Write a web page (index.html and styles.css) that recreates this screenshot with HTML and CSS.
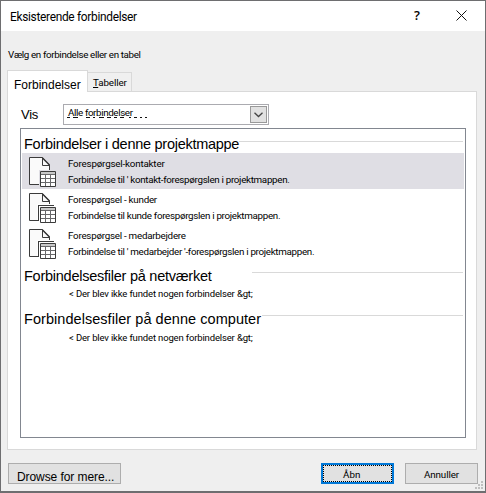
FILE: index.html
```html
<!DOCTYPE html>
<html lang="da">
<head>
<meta charset="utf-8">
<title>Eksisterende forbindelser</title>
<link rel="stylesheet" href="styles.css">
</head>
<body>
<svg class="defs" width="0" height="0" aria-hidden="true">
  <symbol id="file" viewBox="0 0 28 32">
    <path d="M.5 .5H13.5L20.5 8V27.5H.5Z" fill="#fafafa" stroke="#3b3b3b"/>
    <path d="M13.5 .5V8.500H20.500" fill="none" stroke="#3b3b3b"/>
    <path d="M13.500 1L20.500 8" fill="none" stroke="#3b3b3b" stroke-width="1.400"/>
  </symbol>
  <symbol id="grid" viewBox="0 0 16 16">
    <path d="M.5 .5H15.500V15.500H.5Z" fill="#fff" stroke="#3b3b3b"/>
    <path d="M1 1H15V3H1Z" fill="#c8c8c8"/>
    <path d="M1 3.500H15M1 7.500H15M1 11.500H15M5.500 4V15M10.500 4V15" fill="none" stroke="#68686a"/>
  </symbol>
</svg>
<main class="dialog">
  <header class="titlebar">
    <h1 class="title">Eksisterende forbindelser</h1>
    <span class="help">?</span>
    <svg class="close" width="11" height="11" viewBox="0 0 11 11"><path d="M.5 .5L10.500 10.500M10.500 .5L.5 10.500" stroke="#111" fill="none"/></svg>
  </header>
  <p class="prompt">Vælg en forbindelse eller en tabel</p>
  <nav class="tabs">
    <div class="tab active">Forbindelser</div>
    <div class="tab"><span><u>T</u>abeller</span></div>
  </nav>
  <section class="panel">
    <div class="filter">
      <label class="filter-label">Vis</label>
      <div class="select">
        <span class="select-text">Alle forbindelser</span>
        <svg class="residue" width="86" height="1" viewBox="0 0 86 1"><path d="M1 .5H4M7 .5H12M20 .5H24M27 .5H29M33 .5H38M41 .5H45M48 .5H51M54 .5H58M63 .5H65M68 .5H71M74 .5H76M79 .5H81" stroke="#111" fill="none"/></svg>
        <span class="drop"><svg width="9" height="6" viewBox="0 0 9 6"><path d="M.5 .7L4.500 4.500L8.500 .7" fill="none" stroke="#444" stroke-width="1.300"/></svg></span>
      </div>
    </div>
    <div class="list">
      <div class="group"><h2 class="g1">Forbindelser i denne projektmappe</h2><i class="rule r1"></i></div>
      <div class="item selected">
        <div class="icon"><svg class="page" width="28" height="32"><use href="#file"/></svg><svg class="table" width="16" height="16"><use href="#grid"/></svg></div>
        <div class="text"><p class="a1">Forespørgsel-kontakter</p><p class="a2">Forbindelse til ' kontakt-forespørgslen i projektmappen.</p></div>
      </div>
      <div class="item">
        <div class="icon stacked"><svg class="page" width="28" height="32"><use href="#file"/></svg><svg class="table" width="16" height="16"><use href="#grid"/></svg></div>
        <div class="text"><p class="b1">Forespørgsel - kunder</p><p class="b2">Forbindelse til kunde forespørgslen i projektmappen.</p></div>
      </div>
      <div class="item">
        <div class="icon stacked"><svg class="page" width="28" height="32"><use href="#file"/></svg><svg class="table" width="16" height="16"><use href="#grid"/></svg></div>
        <div class="text"><p class="c1">Forespørgsel - medarbejdere</p><p class="c2">Forbindelse til ' medarbejder '-forespørgslen i projektmappen.</p></div>
      </div>
      <div class="group net"><h2 class="g2">Forbindelsesfiler på netværket</h2><i class="rule r2"></i></div>
      <p class="none">&lt; Der blev ikke fundet nogen forbindelser &amp;gt;</p>
      <div class="group pc"><h2 class="g3">Forbindelsesfiler på denne computer</h2><i class="rule r3"></i></div>
      <p class="none last">&lt; Der blev ikke fundet nogen forbindelser &amp;gt;</p>
    </div>
  </section>
  <footer class="actions">
    <button class="btn browse"><span>Drowse for mere...</span></button>
    <button class="btn open"><span>Åbn</span></button>
    <button class="btn cancel"><span>Annuller</span></button>
  </footer>
  <svg class="grip" width="8" height="8" viewBox="0 0 8 8"><path d="M6 0h2v2h-2zM3 3h2v2h-2zM6 3h2v2h-2zM0 6h2v2h-2zM3 6h2v2h-2zM6 6h2v2h-2z" fill="#bfbfbf"/></svg>
</main>
</body>
</html>
```
FILE: styles.css
```css
* { box-sizing: border-box; margin: 0; padding: 0; }
body { width: 486px; height: 493px; overflow: hidden; font-family: Roboto, "Liberation Sans", sans-serif; font-size: 9.8px; color: #000; white-space: nowrap; }
h1, h2 { font-weight: 400; }
.defs { position: absolute; }
.dialog { position: relative; width: 486px; height: 493px; border: 1px solid #6e6e70; border-bottom-width: 2px; background: #efefef; display: flex; flex-direction: column; }
.titlebar { height: 30px; flex: none; background: #fff; display: flex; align-items: flex-start; padding-left: 9px; }
.title { font-size: 11.9px; line-height: 16px; margin-top: 8px; width: 404px; letter-spacing: -0.3px; }
.help { font: 600 13px/16px "Open Sans", sans-serif; margin-top: 6px; width: 42px; }
.close { margin-top: 9px; }
.prompt { height: 39px; flex: none; padding: 17px 0 0 7px; line-height: 14px; letter-spacing: -0.36px; }
.tabs { display: flex; align-items: flex-end; height: 21px; flex: none; padding-left: 6px; }
.tab { height: 19px; width: 44px; border: 1px solid #d9d9d9; border-left: 0; border-bottom: 0; padding-left: 5px; line-height: 20px; background: #f0f0f0; letter-spacing: -0.1px; }
.tab.active { position: relative; z-index: 1; height: 22px; width: 81px; margin-bottom: -1px; border-left: 1px solid #d9d9d9; background: #fff; font: 12px/29px "Liberation Sans", sans-serif; padding-left: 6px; letter-spacing: 0; }
.panel { margin: 0 8px 0 6px; height: 359px; flex: none; border: 1px solid #d9d9d9; background: #fff; padding: 12px 10px 0 12px; }
.filter { display: flex; height: 21px; }
.filter-label { width: 43px; font: 13px/21px "Liberation Sans", sans-serif; padding-left: 1px; letter-spacing: -0.3px; }
.select { position: relative; width: 206px; border: 1px solid #ababb0; padding: 1px; display: flex; justify-content: space-between; }
.select-text { line-height: 14px; padding-left: 3px; letter-spacing: -0.38px; }
.residue { position: absolute; left: 2px; top: 12px; }
.drop { width: 17px; height: 17px; border: 1px solid #999; background: #e1e1e1; display: flex; justify-content: center; align-items: center; }
.list { width: 446px; height: 310px; margin-top: 3px; border: 1px solid #828790; padding: 0 1px; }
.group { display: flex; height: 24px; padding: 6px 1px 0 2px; justify-content: space-between; }
.group h2 { font: 14.5px/19px "Liberation Sans", sans-serif; }
.group .g1 { letter-spacing: -0.27px; }
.group .g2 { letter-spacing: -0.25px; }
.group .g3 { letter-spacing: 0.05px; }
.rule { height: 1px; background: #d9d9d9; margin-top: 6px; }
.r1 { width: 224px; }
.r2 { width: 211px; }
.r3 { width: 201px; }
.item { display: flex; height: 36px; padding-left: 7px; }
.selected { background: #dfdee4; }
.icon { position: relative; width: 39px; padding-top: 4px; }
.page { display: block; }
.table { position: absolute; left: 11px; top: 18px; outline: 1px solid #fff; }
.selected .table { outline-color: #dfdee4; }
.stacked .table { outline: 0; box-shadow: -1px -1px #fff, -2px -2px #3b3b3b, -3px -3px #fff; }
.text { padding-top: 3px; }
.text p { line-height: 16px; letter-spacing: -0.31px; }
.text .a1 { letter-spacing: -0.19px; }
.text .b1, .text .c1 { letter-spacing: -0.25px; }
.group.net { padding-top: 6px; height: 26px; }
.net .rule { margin-top: 5px; }
.group.pc { height: 24px; padding-top: 4px; }
.pc .rule { margin-top: 5px; }
.none { padding-left: 47px; line-height: 14px; height: 19px; font-size: 9.5px; letter-spacing: -0.15px; }
.none.last { padding-top: 1px; }
.actions { display: flex; padding: 13px 6px 0 7px; }
.btn { height: 21px; width: 73px; border: 1px solid #adadad; background: #e1e1e1; font: 9.8px/17px Roboto, sans-serif; color: #000; text-align: left; }
.browse { width: 113px; font: 12px/23px "Liberation Sans", sans-serif; padding: 2px 0 0 8px; margin-right: 200px; letter-spacing: -0.08px; }
.open { border: 2px solid #0078d7; margin-right: 11px; padding: 1px 0 0 20px; outline: 1px dotted #000; outline-offset: -3px; }
.cancel { padding: 2px 0 0 18px; letter-spacing: -0.12px; }
.grip { position: absolute; right: 2px; bottom: 2px; }
```
